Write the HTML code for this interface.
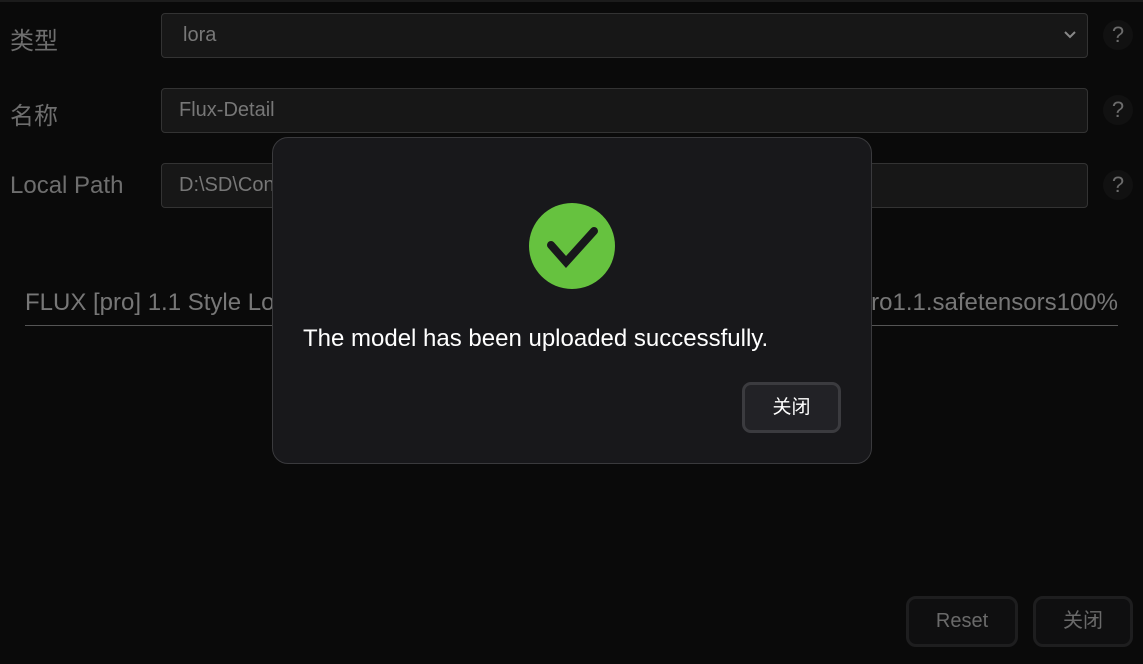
<!DOCTYPE html>
<html><head><meta charset="utf-8"><style>
*{box-sizing:border-box;margin:0;padding:0}
body{width:1143px;height:664px;background:#0a0a0a;font-family:"Liberation Sans","Noto Sans CJK SC",sans-serif;position:relative;overflow:hidden;color:#6b6b6b}
.top{position:absolute;left:0;top:0;width:1143px;height:2px;background:#1c1c1c}
.lbl{position:absolute;left:10px;font-size:24px;color:#6e6e6e}
.inp{position:absolute;left:161px;width:927px;height:45px;background:#171717;border:1px solid #333;border-radius:4px;font-size:20px;color:#777;padding:0 0 0 17px;line-height:43px}
.q{position:absolute;left:1103px;width:30px;height:30px;border-radius:50%;background:#111;color:#6c6c6c;font-size:22px;text-align:center;line-height:30px}
.row{position:absolute;left:25px;top:289px;width:1093px;height:37px;border-bottom:1px solid #555;font-size:24px;color:#777;white-space:nowrap}
.dlg{position:absolute;left:272px;top:137px;width:600px;height:327px;background:#18181b;border:1px solid #3a3a3d;border-radius:16px}
.msg{position:absolute;left:30px;top:187px;font-size:24px;color:#fff}
.ok{position:absolute;left:469px;top:244px;width:99px;height:51px;border:3px solid #3b3b3f;border-radius:9px;background:#222226;color:#fff;font-size:19px;text-align:center;line-height:45px}
.b{position:absolute;top:596px;height:51px;border:3px solid #1e1e1f;border-radius:10px;background:#0f0f10;color:#6a6a6a;font-size:20px;text-align:center;line-height:45px}
</style></head><body>
<div class="top"></div>
<div class="lbl" style="top:21px">类型</div>
<div class="lbl" style="top:96px">名称</div>
<div class="lbl" style="top:172px">Local Path</div>
<div class="inp" style="top:13px;padding-left:21px">lora
<svg style="position:absolute;right:10px;top:16px" width="14" height="10" viewBox="0 0 14 10"><path d="M2 2l5 5 5-5" stroke="#888" stroke-width="2" fill="none"/></svg></div>
<div class="inp" style="top:88px">Flux-Detail</div>
<div class="inp" style="top:163px">D:\SD\Con</div>
<div class="q" style="top:20px">?</div>
<div class="q" style="top:95px">?</div>
<div class="q" style="top:170px">?</div>
<div class="row">FLUX [pro] 1.1 Style Lo<span style="position:absolute;right:0">ro1.1.safetensors100%</span></div>
<div class="dlg">
<svg style="position:absolute;left:256px;top:65px" width="86" height="86" viewBox="0 0 86 86"><circle cx="43" cy="43" r="43" fill="#66c23f"/><path d="M22 42l15 17 28-31" stroke="#18181b" stroke-width="8" fill="none" stroke-linecap="round"/></svg>
<div class="msg">The model has been uploaded successfully.</div>
<div class="ok">关闭</div>
</div>
<div class="b" style="left:906px;width:112px">Reset</div>
<div class="b" style="left:1033px;width:100px">关闭</div>
</body></html>
